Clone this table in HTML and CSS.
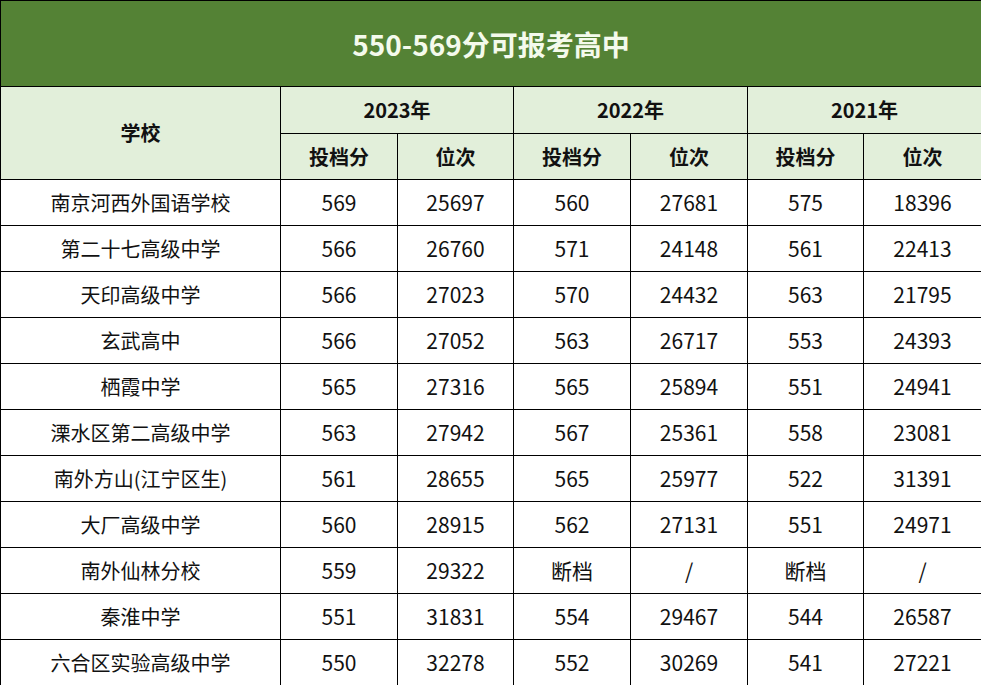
FILE: index.html
```html
<!DOCTYPE html>
<html lang="zh">
<head>
<meta charset="utf-8">
<link rel="stylesheet" href="styles.css">
</head>
<body>
<table class="tbl">
<colgroup>
<col class="c-school"><col class="c1"><col class="c2"><col class="c3"><col class="c4"><col class="c5"><col class="c6">
</colgroup>
<thead>
<tr class="title"><th colspan="7">550-569分可报考高中</th></tr>
<tr class="hd hd1"><th rowspan="2">学校</th><th colspan="2">2023年</th><th colspan="2">2022年</th><th colspan="2">2021年</th></tr>
<tr class="hd hd2"><th>投档分</th><th>位次</th><th>投档分</th><th>位次</th><th>投档分</th><th>位次</th></tr>
</thead>
<tbody>
<tr><td>南京河西外国语学校</td><td>569</td><td>25697</td><td>560</td><td>27681</td><td>575</td><td>18396</td></tr>
<tr><td>第二十七高级中学</td><td>566</td><td>26760</td><td>571</td><td>24148</td><td>561</td><td>22413</td></tr>
<tr><td>天印高级中学</td><td>566</td><td>27023</td><td>570</td><td>24432</td><td>563</td><td>21795</td></tr>
<tr><td>玄武高中</td><td>566</td><td>27052</td><td>563</td><td>26717</td><td>553</td><td>24393</td></tr>
<tr><td>栖霞中学</td><td>565</td><td>27316</td><td>565</td><td>25894</td><td>551</td><td>24941</td></tr>
<tr><td>溧水区第二高级中学</td><td>563</td><td>27942</td><td>567</td><td>25361</td><td>558</td><td>23081</td></tr>
<tr><td>南外方山(江宁区生)</td><td>561</td><td>28655</td><td>565</td><td>25977</td><td>522</td><td>31391</td></tr>
<tr><td>大厂高级中学</td><td>560</td><td>28915</td><td>562</td><td>27131</td><td>551</td><td>24971</td></tr>
<tr><td>南外仙林分校</td><td>559</td><td>29322</td><td>断档</td><td>/</td><td>断档</td><td>/</td></tr>
<tr><td>秦淮中学</td><td>551</td><td>31831</td><td>554</td><td>29467</td><td>544</td><td>26587</td></tr>
<tr><td>六合区实验高级中学</td><td>550</td><td>32278</td><td>552</td><td>30269</td><td>541</td><td>27221</td></tr>
</tbody>
</table>
</body>
</html>
```
FILE: styles.css
```css
html, body {
  margin: 0;
  padding: 0;
  background: #ffffff;
}
body {
  font-family: "Noto Sans CJK SC", "Noto Sans", sans-serif;
  color: #111;
  overflow: hidden;
}
.tbl {
  border-collapse: collapse;
  table-layout: fixed;
  width: 981px;
}
.c-school { width: 280px; }
.c1 { width: 117px; }
.c2 { width: 116px; }
.c3 { width: 117px; }
.c4 { width: 117px; }
.c5 { width: 116px; }
.c6 { width: 118px; }
.tbl th, .tbl td {
  border: 1px solid #000;
  text-align: center;
  padding: 0;
  line-height: 1;
}
.title th {
  background: #548235;
  color: #f4faec;
  font-size: 28px;
  font-weight: 700;
  height: 85px;
}
.hd th {
  background: #e2efda;
  font-size: 20px;
  font-weight: 700;
}
.hd1 th {
  height: 46px;
}
.hd2 th {
  height: 45px;
}
.tbl td {
  font-size: 20px;
  height: 45px;
  font-weight: 400;
}
.tbl td + td {
  font-size: 21px;
}
```
